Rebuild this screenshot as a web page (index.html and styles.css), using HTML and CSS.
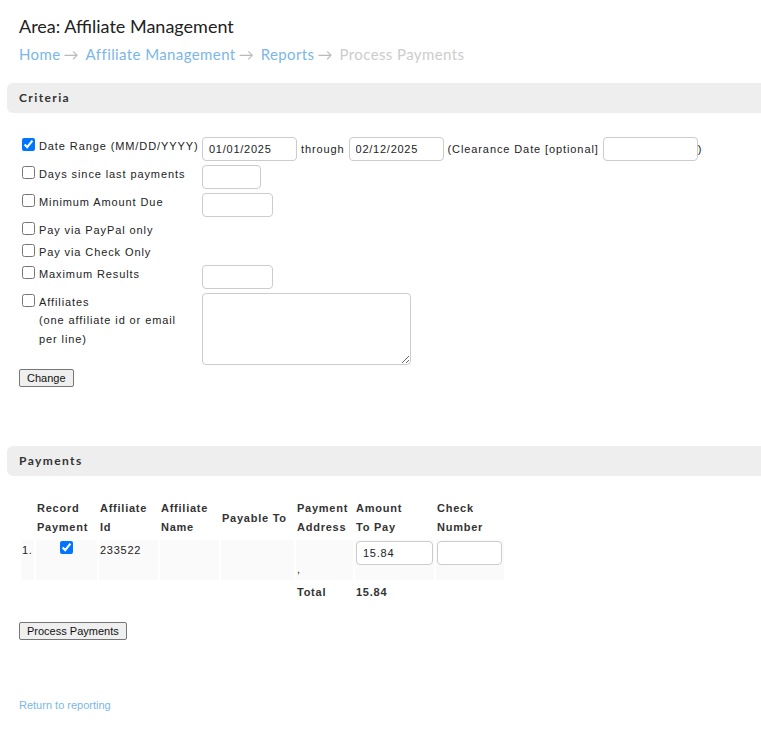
FILE: index.html
```html
<!DOCTYPE html>
<html lang="en">
<head>
    <meta charset="UTF-8">
    <title>Process Payments</title>
    <link rel="stylesheet" href="styles.css">
</head>
<body>
    <h1 class="area-title">Area: Affiliate Management</h1>
    <div class="crumbs"><a href="#">Home</a><span class="arrow">&rarr;</span><a href="#">Affiliate Management</a><span class="arrow">&rarr;</span><a href="#">Reports</a><span class="arrow">&rarr;</span><span class="current">Process Payments</span></div>

    <!-- criteria -->
    <h2 class="section-bar">Criteria</h2>
    <form class="criteria">
        <table class="crit-table">
            <tr>
                <td class="lbl"><input type="checkbox" checked><span>Date Range (MM/DD/YYYY)</span></td>
                <td class="fld">
                    <input type="text" class="txt date" value="01/01/2025">
                    <span class="sep">through</span>
                    <input type="text" class="txt date" value="02/12/2025">
                    <span class="sep">(Clearance Date [optional]</span>
                    <input type="text" class="txt date" value=""><span class="sep">)</span>
                </td>
            </tr>
            <tr>
                <td class="lbl"><input type="checkbox"><span>Days since last payments</span></td>
                <td class="fld"><input type="text" class="txt small"></td>
            </tr>
            <tr>
                <td class="lbl"><input type="checkbox"><span>Minimum Amount Due</span></td>
                <td class="fld"><input type="text" class="txt mid"></td>
            </tr>
            <tr>
                <td class="lbl"><input type="checkbox"><span>Pay via PayPal only</span></td>
                <td class="fld"></td>
            </tr>
            <tr>
                <td class="lbl"><input type="checkbox"><span>Pay via Check Only</span></td>
                <td class="fld"></td>
            </tr>
            <tr>
                <td class="lbl"><input type="checkbox"><span>Maximum Results</span></td>
                <td class="fld"><input type="text" class="txt mid"></td>
            </tr>
            <tr>
                <td class="lbl"><input type="checkbox"><span>Affiliates</span>
                    <div class="note">(one affiliate id or email<br>per line)</div>
                </td>
                <td class="fld"><textarea class="aff-list"></textarea></td>
            </tr>
        </table>
        <button type="button" class="btn">Change</button>
    </form>

    <!-- payments -->
    <h2 class="section-bar payments-bar">Payments</h2>
    <table class="pay-table">
        <thead>
            <tr>
                <th class="c-num"></th>
                <th class="c-rec">Record<br>Payment</th>
                <th class="c-id">Affiliate<br>Id</th>
                <th class="c-name">Affiliate<br>Name</th>
                <th class="c-payable">Payable To</th>
                <th class="c-addr">Payment<br>Address</th>
                <th class="c-amt">Amount<br>To Pay</th>
                <th class="c-check">Check<br>Number</th>
            </tr>
        </thead>
        <tbody>
            <tr class="row">
                <td>1.</td>
                <td class="center"><input type="checkbox" checked></td>
                <td>233522</td>
                <td></td>
                <td></td>
                <td><br>,</td>
                <td><input type="text" class="txt amt" value="15.84"></td>
                <td><input type="text" class="txt chk"></td>
            </tr>
            <tr class="total">
                <td colspan="5"></td>
                <td>Total</td>
                <td>15.84</td>
                <td></td>
            </tr>
        </tbody>
    </table>
    <button type="button" class="btn">Process Payments</button>

    <p class="back"><a href="#">Return to reporting</a></p>
</body>
</html>
```

FILE: styles.css
```css
* {
    box-sizing: border-box;
}

body {
    margin: 0;
    padding: 0 0 0 19px;
    font-family: "Liberation Sans", Arial, sans-serif;
    font-size: 11px;
    color: #222;
    background: #fff;
    overflow-x: hidden;
}

/* titles */
.area-title {
    font-family: Lato, "Open Sans", sans-serif;
    font-weight: normal;
    font-size: 18px;
    line-height: 24px;
    margin: 14px 0 0 0;
    color: #222;
}

.crumbs {
    font-family: Lato, "Open Sans", sans-serif;
    font-size: 15px;
    line-height: 20px;
    margin-top: 6px;
    letter-spacing: 0.4px;
}

.crumbs a {
    color: #7ab7e8;
    text-decoration: none;
}

.crumbs .arrow {
    color: #bbb;
    letter-spacing: 0;
    margin: 0 7px 0 3px;
}

.crumbs .current {
    color: #ccc;
}

.section-bar {
    font-family: Lato, "Open Sans", sans-serif;
    font-size: 12px;
    font-weight: bold;
    letter-spacing: 1.4px;
    color: #333;
    background: #eee;
    border-radius: 6px 0 0 6px;
    margin: 19px -40px 0 -12px;
    padding: 0 0 0 12px;
    height: 30px;
    line-height: 30px;
}

/* criteria form */
.criteria {
    margin-top: 22px;
}

.crit-table {
    border-collapse: collapse;
}

.crit-table td {
    padding: 2px 0;
    vertical-align: top;
    letter-spacing: 0.9px;
    line-height: 18px;
}

.crit-table .lbl {
    width: 183px;
    white-space: nowrap;
}

.lbl input[type="checkbox"] {
    width: 13px;
    height: 13px;
    margin: 1px 4px 0 3px;
    vertical-align: top;
}

.note {
    padding-left: 20px;
    line-height: 19px;
}

.txt {
    font-family: "Liberation Sans", Arial, sans-serif;
    font-size: 11px;
    letter-spacing: 0.75px;
    color: #222;
    height: 24px;
    border: 1px solid #ccc;
    border-radius: 4px;
    padding: 0 6px;
    margin: 0;
    vertical-align: top;
}

.txt.date {
    width: 95px;
}

.txt.small {
    width: 59px;
}

.txt.mid {
    width: 71px;
}

.sep {
    line-height: 24px;
    letter-spacing: 0.9px;
}

.aff-list {
    width: 209px;
    height: 72px;
    border: 1px solid #ccc;
    border-radius: 4px;
    resize: vertical;
    vertical-align: top;
    margin: 0;
}

.btn {
    font-family: "Liberation Sans", Arial, sans-serif;
    font-size: 11px;
    color: #111;
    background: #efefef;
    border: 1px solid #767676;
    border-radius: 2px;
    height: 18px;
    padding: 0 7px;
    margin: 2px 0 0 0;
    line-height: 16px;
}

/* payments table */
.payments-bar {
    margin-top: 59px;
}

.pay-table {
    margin: 20px 0 0 0;
    border-spacing: 2px;
}

.pay-table th,
.pay-table td {
    padding: 1px;
    text-align: left;
    vertical-align: top;
    line-height: 19px;
    letter-spacing: 0.75px;
}

.pay-table th {
    font-weight: bold;
    vertical-align: middle;
    color: #333;
}

.c-num { width: 13px; }
.c-rec { width: 61px; }
.c-id { width: 59px; }
.c-name { width: 59px; }
.c-payable { width: 73px; }
.c-addr { width: 57px; }
.c-amt { width: 78px; }
.c-check { width: 68px; }

.row td {
    background: #fafafa;
    height: 39px;
}

.row .center {
    text-align: center;
}

.row input[type="checkbox"] {
    width: 13px;
    height: 13px;
    margin: 0;
}

.txt.amt {
    width: 77px;
}

.txt.chk {
    width: 65px;
}

.total td {
    font-weight: bold;
    color: #333;
}

.pay-table + .btn {
    margin-top: 17px;
}

.back {
    margin: 59px 0 0 0;
}

.back a {
    color: #7ab7e8;
    text-decoration: none;
    font-size: 11px;
}
```
